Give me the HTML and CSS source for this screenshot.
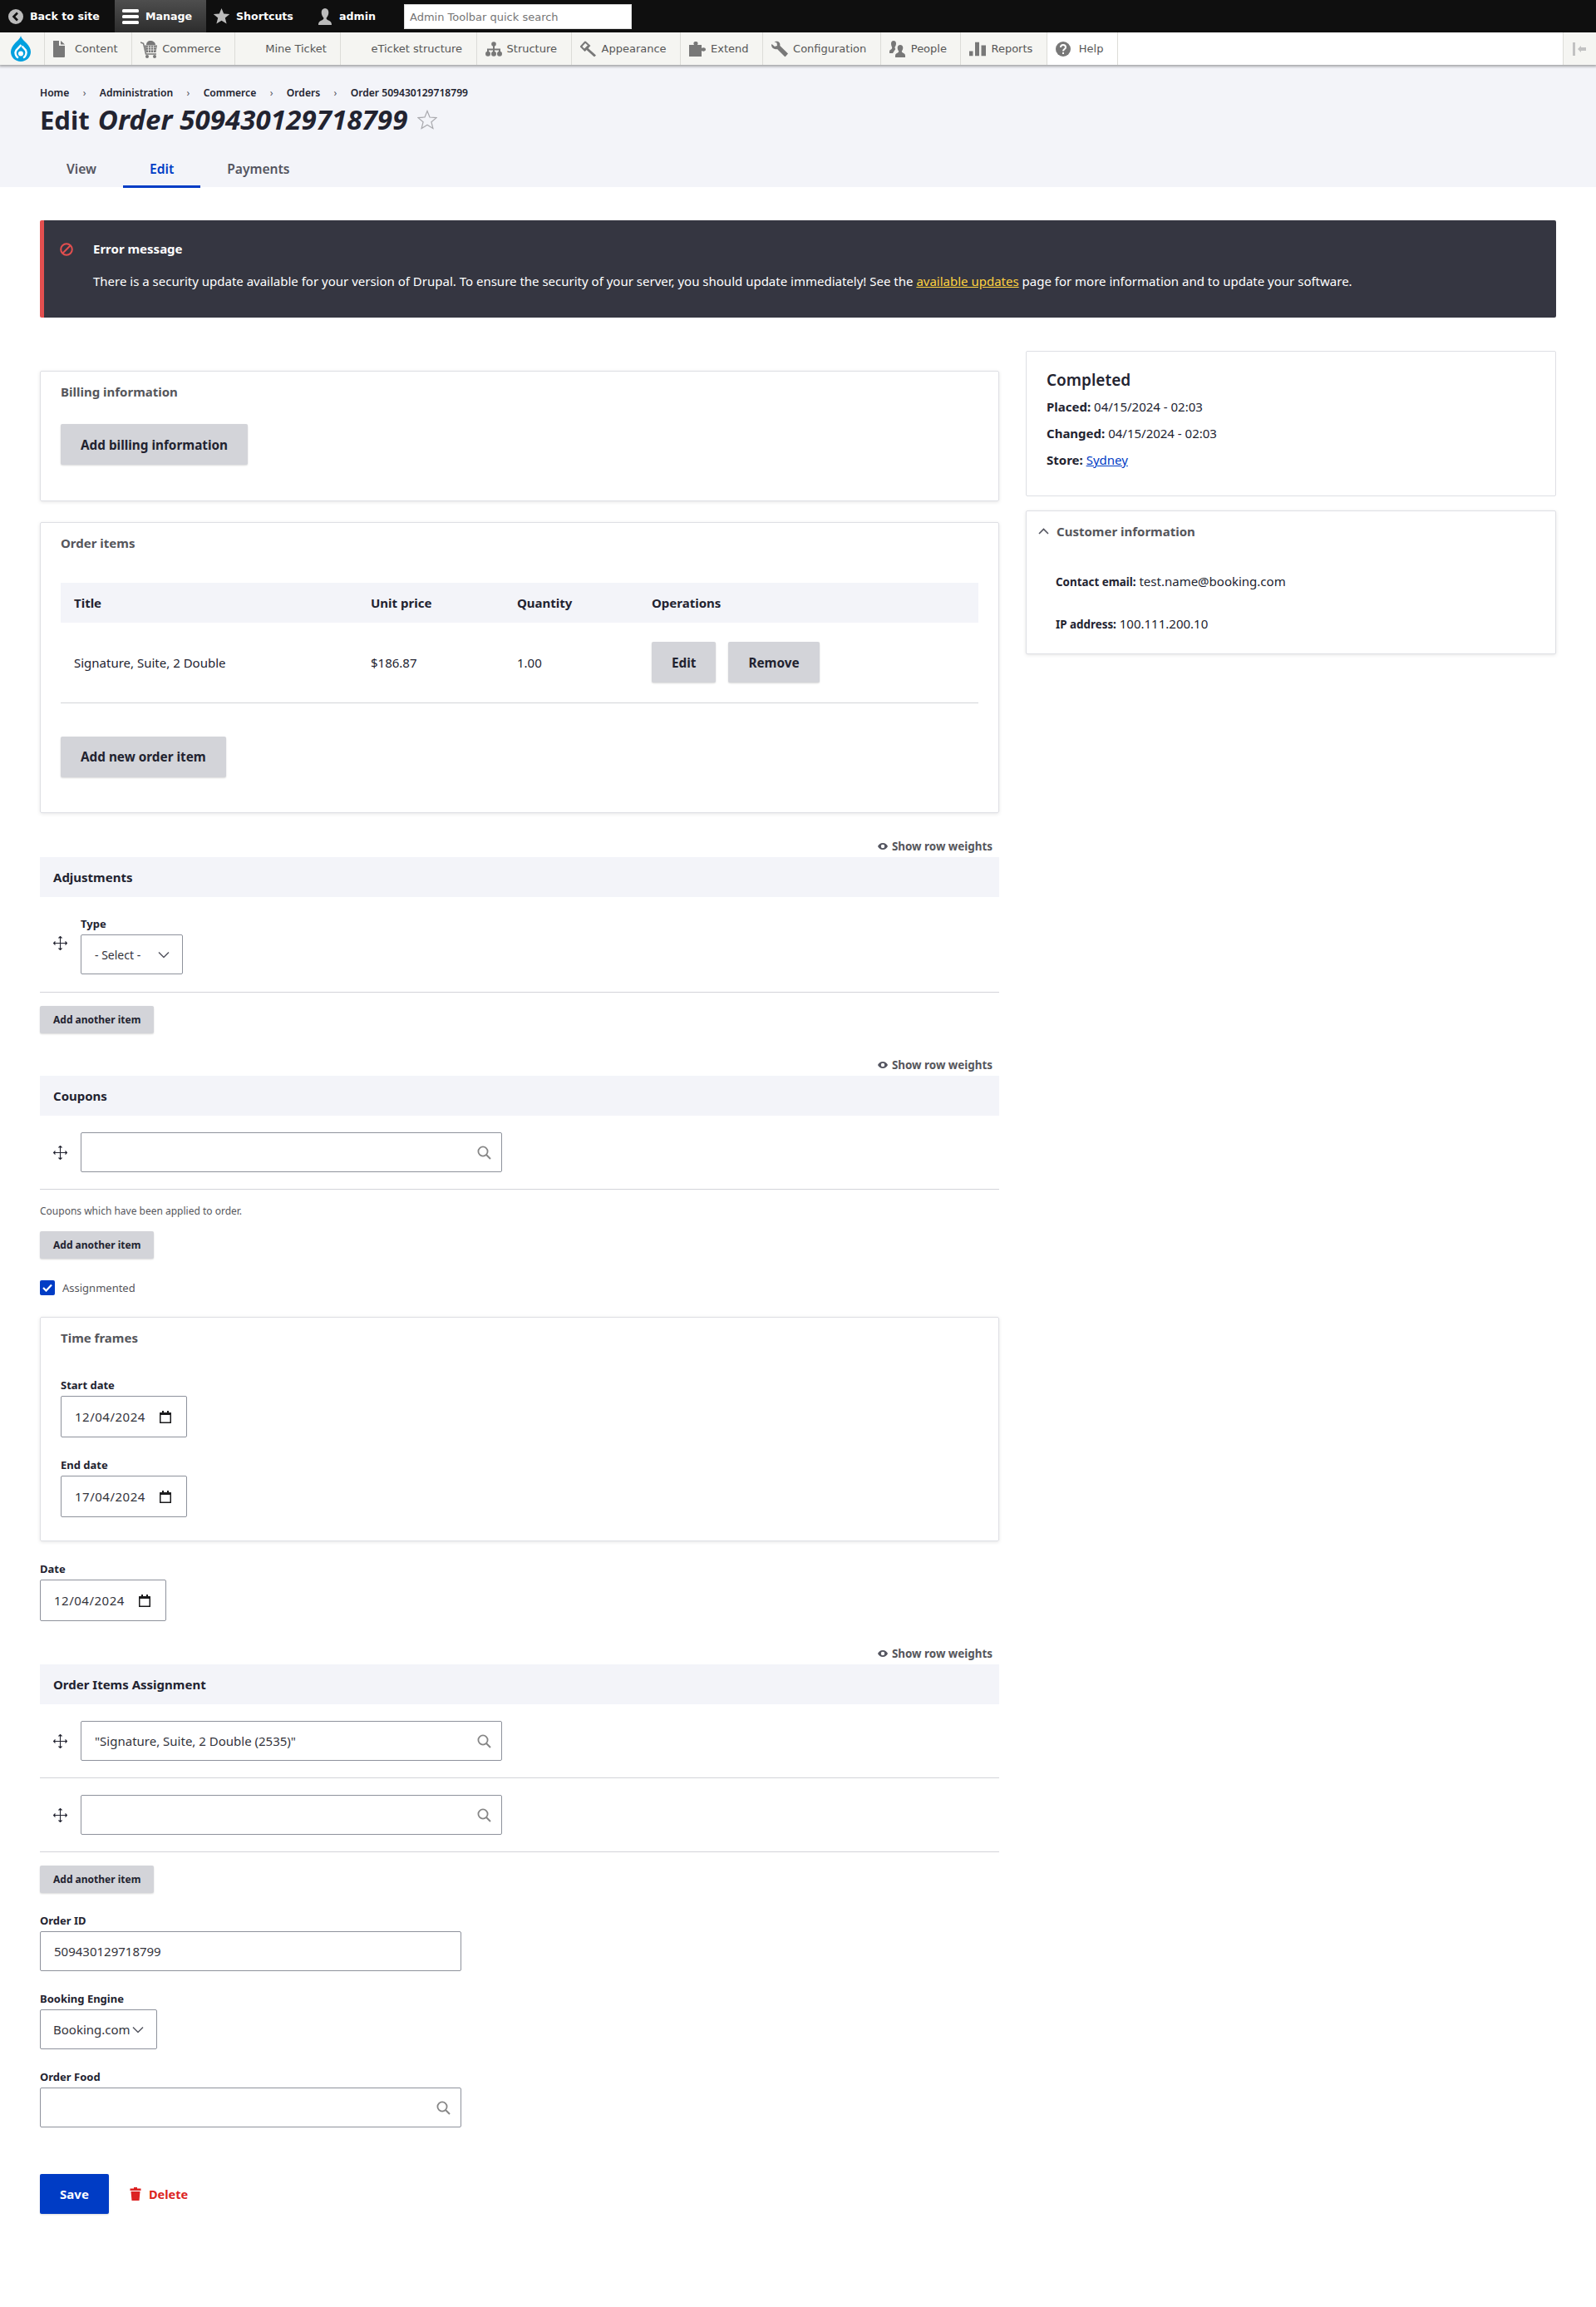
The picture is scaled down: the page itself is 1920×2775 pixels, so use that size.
FILE: index.html
```html
<!DOCTYPE html>
<html lang="en">
<head>
<meta charset="utf-8">
<title>Edit Order 509430129718799</title>
<link rel="stylesheet" href="styles.css">
</head>
<body>
<svg class="defs" width="0" height="0" aria-hidden="true">
  <symbol id="handle" viewBox="0 0 17 17"><path d="M8.5 0.5v16M0.5 8.5h16M6.5 2.5l2-2 2 2M6.5 14.5l2 2 2-2M2.5 6.5l-2 2 2 2M14.5 6.5l2 2-2 2" fill="none" stroke="#222330" stroke-width="1.1"/></symbol>
  <symbol id="search" viewBox="0 0 17 17"><circle cx="7" cy="7" r="5.6" fill="none" stroke="#868686" stroke-width="1.8"/><path d="M11 11l5 5" stroke="#868686" stroke-width="2"/></symbol>
  <symbol id="chev" viewBox="0 0 14 9"><path d="M1 1.5l6 6 6-6" fill="none" stroke="#545560" stroke-width="1.5"/></symbol>
  <symbol id="cal" viewBox="0 0 14 15"><path d="M3 0h2v2h4V0h2v2h2.5a.5.5 0 0 1 .5.5v12a.5.5 0 0 1-.5.5H.5a.5.5 0 0 1-.5-.5v-12A.5.5 0 0 1 .5 2H3zM1.5 5v8.500h11V5z" fill="#1b1b1d"/></symbol>
  <symbol id="eye" viewBox="0 0 12 8"><path d="M6 0C3 0 1 2 0 4c1 2 3 4 6 4s5-2 6-4c-1-2-3-4-6-4zm0 6.200A2.200 2.200 0 1 1 6 1.800a2.200 2.200 0 0 1 0 4.400z" fill="#545560"/></symbol>
</svg>

<header class="toolbar">
  <nav class="bar">
    <a class="bar-tab tab-back"><svg width="18" height="18" viewBox="0 0 18 18"><circle cx="9" cy="9" r="9" fill="#bbb"/><path d="M11 4.500L6.500 9l4.500 4.500" fill="none" stroke="#0f0f0f" stroke-width="2.600"/></svg>Back to site</a>
    <a class="bar-tab tab-manage"><svg width="20" height="18" viewBox="0 0 20 18"><rect y="0" width="20" height="4" rx="1.500" fill="#fff"/><rect y="7" width="20" height="4" rx="1.500" fill="#fff"/><rect y="14" width="20" height="4" rx="1.500" fill="#fff"/></svg>Manage</a>
    <a class="bar-tab tab-short"><svg width="19" height="19" viewBox="0 0 19 19"><path d="M9.500 0l2.700 6.600 7 .5-5.400 4.500 1.800 7-6.100-3.800-6.100 3.800 1.800-7L-.2 7.100l7-.5z" fill="#bbb"/></svg>Shortcuts</a>
    <a class="bar-tab tab-user"><svg width="20" height="20" viewBox="0 0 20 20"><path d="M10 0c2.800 0 4.300 2.200 4.300 5 0 2.700-1.300 5.300-2.600 6.500-.3 1.300.3 2 2.300 3 2.300 1 4 1.800 4 5.500H2c0-3.700 1.700-4.500 4-5.500 2-1 2.600-1.700 2.300-3C7 10.300 5.700 7.700 5.700 5 5.700 2.200 7.200 0 10 0z" fill="#bbb"/></svg>admin</a>
    <div class="bar-search">Admin Toolbar quick search</div>
  </nav>
  <nav class="tray">
    <a class="tray-logo"><svg width="24" height="31" viewBox="0 0 24 31"><path d="M12 0c1 4 4.500 6 7 9 3 3.300 5 6.500 5 10.500C24 26 18.500 31 12 31S0 26 0 19.500C0 15.500 2 12.300 5 9c2.500-3 6-5 7-9z" fill="#00a0df"/><path d="M12.500 11L6.500 17.500C4.500 20.500 6 25 9 26.500M13.500 12.500L18 17.500C19.500 20.500 18 25 15 26.500" fill="none" stroke="#fff" stroke-width="2.400"/><circle cx="12" cy="21.500" r="3" fill="#fff"/></svg></a>
    <a class="tray-item"><svg class="ti" width="14" height="20" viewBox="0 0 14 20"><path d="M0 0h7v6h7v13a1 1 0 0 1-1 1H1a1 1 0 0 1-1-1zM9 0l5 4.500H9z" fill="#787878"/></svg>Content</a>
    <a class="tray-item"><svg class="ti ti-cart" width="20" height="22" viewBox="0 0 20 22"><path d="M0 3l3.500 1.200L6.500 17H19" fill="none" stroke="#787878" stroke-width="1.500"/><path d="M7 6c0-3 2-5 5-5 3 0 6 2 6 5z" fill="#787878"/><path d="M5 6.500h15l-1.500 8.500H7z" fill="#787878"/><path d="M7 9h12M7.500 12h11M9.500 7v8M12.500 7v8M15.500 7v8" stroke="#f5f5f2" stroke-width=".7"/><circle cx="8" cy="20" r="2" fill="#787878"/><circle cx="17" cy="20" r="2" fill="#787878"/></svg>Commerce</a>
    <a class="tray-item">Mine Ticket</a>
    <a class="tray-item">eTicket structure</a>
    <a class="tray-item"><svg class="ti" width="20" height="18" viewBox="0 0 20 18"><circle cx="10" cy="3" r="2.800" fill="#787878"/><circle cx="3" cy="14.800" r="3" fill="#787878"/><circle cx="10" cy="14.800" r="3" fill="#787878"/><circle cx="17" cy="14.800" r="3" fill="#787878"/><path d="M10 5v8M3 13v-3.500h14V13" fill="none" stroke="#787878" stroke-width="2"/></svg>Structure</a>
    <a class="tray-item"><svg class="ti" width="20" height="19" viewBox="0 0 20 19"><path d="M6 1L1 6.500 5.500 11 11 5.500z" fill="none" stroke="#787878" stroke-width="2"/><path d="M8 9l10 9" stroke="#787878" stroke-width="3"/><path d="M4 10l5-5 2 2-5 5z" fill="#787878"/></svg>Appearance</a>
    <a class="tray-item"><svg class="ti" width="20" height="18" viewBox="0 0 20 18"><path d="M0 4h6C4.500 1.500 6 0 8 0s3.500 1.500 2 4h5v4c2-1.500 5-.5 5 1.500S17 12.500 15 11v7H0z" fill="#787878"/></svg>Extend</a>
    <a class="tray-item"><svg class="ti" width="20" height="19" viewBox="0 0 20 19"><path d="M6 0c3 0 5 2.500 4.300 5.500L20 15l-3.500 4-9.500-9.500C3.500 10.500 0 8 0 4.500L.5 3.500 4 6.500l3-1-.5-3.500L3.500.8z" fill="#787878"/></svg>Configuration</a>
    <a class="tray-item"><svg class="ti" width="20" height="20" viewBox="0 0 20 20"><path d="M5 0c2 0 3 1.500 3 3.500 0 1.500-.6 3-1.500 4 0 1 .3 2 .8 2.500L4 15H0v-2c0-1.500 1-2 2.500-3 .6-.5.8-1.500.5-2.500C2.500 6.500 2 5 2 3.500 2 1.500 3 0 5 0z" fill="#787878"/><path d="M13 5c2 0 3.300 1.500 3.300 3.500 0 1.500-.7 3-1.500 4 0 1 .5 1.500 1.700 2.200 1.500.8 2.500 1.300 2.500 3.300v2H7v-2c0-2 1-2.500 2.500-3.300 1.200-.7 1.700-1.200 1.700-2.200-.8-1-1.500-2.500-1.500-4C9.700 6.500 11 5 13 5z" fill="#787878"/></svg>People</a>
    <a class="tray-item"><svg class="ti" width="20" height="17" viewBox="0 0 20 17"><path d="M0 11h4.500v6H0zM7 0h5v17H7zM14.500 4H20v13h-5.500z" fill="#787878"/></svg>Reports</a>
    <a class="tray-item tray-help"><svg class="ti" width="18" height="18" viewBox="0 0 18 18"><circle cx="9" cy="9" r="9" fill="#787878"/><path d="M6 7c0-4 6-4 6 0 0 2-3 2-3 4.500" fill="none" stroke="#fff" stroke-width="2"/><rect x="8" y="13" width="2" height="2" fill="#fff"/></svg>Help</a>
    <div class="tray-fill"></div>
    <a class="tray-toggle" aria-label="Toggle orientation"><svg width="16" height="16" viewBox="0 0 16 16"><rect x="0" y="0" width="3" height="16" fill="#c2c2c2"/><path d="M6 8l4-4v2h6v4h-6v2z" fill="#c2c2c2"/></svg></a>
  </nav>
</header>

<section class="page-head">
  <ol class="crumbs">
    <li>Home</li><li class="sep">›</li><li>Administration</li><li class="sep">›</li><li>Commerce</li><li class="sep">›</li><li>Orders</li><li class="sep">›</li><li>Order 509430129718799</li>
  </ol>
  <h1 class="page-title"><span class="title-edit">Edit</span><em>Order 509430129718799</em><svg class="fav" width="24" height="24" viewBox="0 0 24 24"><path d="M12 1.500l3 7.500 8 .6-6.100 5.100 2 7.800L12 18.300 5.100 22.500l2-7.800L1 9.600l8-.6z" fill="none" stroke="#a9a9ae" stroke-width="1.200"/></svg></h1>
  <ul class="tabs">
    <li class="tab">View</li>
    <li class="tab tab-active">Edit</li>
    <li class="tab">Payments</li>
  </ul>
</section>

<main class="content">
  <div class="msg-error">
    <svg class="msg-icon" width="16" height="16" viewBox="0 0 16 16"><circle cx="8" cy="8" r="6.800" fill="none" stroke="#e34f4f" stroke-width="2"/><path d="M3.500 12.500l9-9" stroke="#e34f4f" stroke-width="2"/></svg>
    <div class="msg-body">
      <h2 class="msg-title">Error message</h2>
      <p class="msg-text">There is a security update available for your version of Drupal. To ensure the security of your server, you should update immediately! See the <a class="msg-link">available updates</a> page for more information and to update your software.</p>
    </div>
  </div>

  <div class="layout">
    <form class="col-main">
      <fieldset class="card card-billing">
        <h3 class="card-title">Billing information</h3>
        <button type="button" class="btn">Add billing information</button>
      </fieldset>

      <fieldset class="card card-items">
        <h3 class="card-title">Order items</h3>
        <table class="items">
          <thead><tr><th class="c-title">Title</th><th class="c-price">Unit price</th><th class="c-qty">Quantity</th><th>Operations</th></tr></thead>
          <tbody><tr>
            <td>Signature, Suite, 2 Double</td><td>$186.87</td><td>1.00</td>
            <td class="ops-cell"><div class="ops"><button type="button" class="btn">Edit</button><button type="button" class="btn">Remove</button></div></td>
          </tr></tbody>
        </table>
        <button type="button" class="btn">Add new order item</button>
      </fieldset>

      <div class="weights weights-a"><svg width="12" height="8"><use href="#eye"/></svg>Show row weights</div>
      <div class="multi-head">Adjustments</div>
      <div class="row row-adj">
        <svg class="handle" width="17" height="17"><use href="#handle"/></svg>
        <div class="type-field">
          <label class="label">Type</label>
          <div class="field select select-type"><span>- Select -</span><svg width="14" height="9"><use href="#chev"/></svg></div>
        </div>
      </div>
      <button type="button" class="btn btn-small">Add another item</button>

      <div class="weights weights-b"><svg width="12" height="8"><use href="#eye"/></svg>Show row weights</div>
      <div class="multi-head">Coupons</div>
      <div class="row row-coupon">
        <svg class="handle" width="17" height="17"><use href="#handle"/></svg>
        <div class="field auto"><svg width="17" height="17"><use href="#search"/></svg></div>
      </div>
      <p class="help">Coupons which have been applied to order.</p>
      <button type="button" class="btn btn-small">Add another item</button>
      <label class="check"><span class="box"><svg width="12" height="10" viewBox="0 0 12 10"><path d="M1 5l3.500 3.500L11 1.500" fill="none" stroke="#fff" stroke-width="2.200"/></svg></span>Assignmented</label>

      <fieldset class="card card-time">
        <h3 class="card-title">Time frames</h3>
        <label class="label label-start">Start date</label>
        <div class="field date"><span>12/04/2024</span><svg width="14" height="15"><use href="#cal"/></svg></div>
        <label class="label label-end">End date</label>
        <div class="field date"><span>17/04/2024</span><svg width="14" height="15"><use href="#cal"/></svg></div>
      </fieldset>

      <label class="label label-date">Date</label>
      <div class="field date"><span>12/04/2024</span><svg width="14" height="15"><use href="#cal"/></svg></div>

      <div class="weights weights-c"><svg width="12" height="8"><use href="#eye"/></svg>Show row weights</div>
      <div class="multi-head">Order Items Assignment</div>
      <div class="row row-assign">
        <svg class="handle" width="17" height="17"><use href="#handle"/></svg>
        <div class="field auto"><span>"Signature, Suite, 2 Double (2535)"</span><svg width="17" height="17"><use href="#search"/></svg></div>
      </div>
      <div class="row row-assign">
        <svg class="handle" width="17" height="17"><use href="#handle"/></svg>
        <div class="field auto"><svg width="17" height="17"><use href="#search"/></svg></div>
      </div>
      <button type="button" class="btn btn-small btn-assign">Add another item</button>

      <label class="label label-block">Order ID</label>
      <div class="field wide"><span>509430129718799</span></div>
      <label class="label label-block">Booking Engine</label>
      <div class="field select select-engine"><span>Booking.com</span><svg width="14" height="9"><use href="#chev"/></svg></div>
      <label class="label label-block">Order Food</label>
      <div class="field wide auto-wide"><svg width="17" height="17"><use href="#search"/></svg></div>

      <div class="actions">
        <button type="button" class="btn btn-save">Save</button>
        <a class="del"><svg width="14" height="16" viewBox="0 0 14 16"><path d="M5 0h4v1.500h4.500V4H.5V1.500H5zM1.500 5h11l-1 11h-9z" fill="#dc2323"/></svg>Delete</a>
      </div>
    </form>

    <aside class="col-side">
      <div class="side-card side-status">
        <h2 class="status">Completed</h2>
        <p class="meta"><b>Placed:</b> 04/15/2024 - 02:03</p>
        <p class="meta"><b>Changed:</b> 04/15/2024 - 02:03</p>
        <p class="meta"><b>Store:</b> <a class="link">Sydney</a></p>
      </div>
      <div class="side-card side-cust">
        <h3 class="cust-title"><svg width="13" height="8" viewBox="0 0 13 8"><path d="M1 7l5.500-5.500L12 7" fill="none" stroke="#545560" stroke-width="1.600"/></svg>Customer information</h3>
        <p class="cust-row"><b>Contact email:</b> test.name@booking.com</p>
        <p class="cust-row"><b>IP address:</b> 100.111.200.10</p>
      </div>
    </aside>
  </div>
</main>
</body>
</html>
```
FILE: styles.css
```css
* { box-sizing: border-box; }
html, body { margin: 0; padding: 0; }
body { background: #fff; color: #222330; font-family: "Noto Sans", "Open Sans", sans-serif; font-size: 15px; min-height: 2775px; }
h1, h2, h3, p, ul, ol, fieldset { margin: 0; padding: 0; }
fieldset { border: 0; min-width: 0; }
ul, ol { list-style: none; }
button { font-family: inherit; cursor: pointer; }
.defs { position: absolute; }

/* Toolbar */
.toolbar { font-family: "DejaVu Sans", Verdana, sans-serif; font-size: 13px; position: relative; z-index: 2; }
.bar { height: 39px; background: #0f0f0f; display: flex; align-items: center; }
.bar-tab { height: 39px; display: flex; align-items: center; color: #fff; font-weight: 700; font-size: 12.6px; }
.tab-back { width: 138px; padding-left: 10px; gap: 8px; }
.tab-manage { width: 110px; padding-left: 9px; gap: 8px; background: linear-gradient(#4e4e4e, #2d2d2d); }
.tab-short { width: 122px; padding-left: 9px; gap: 8px; }
.tab-user { width: 116px; padding-left: 11px; gap: 7px; }
.bar-search { width: 274px; height: 30px; background: #fff; border: 1px solid #ddd; color: #757575; font-size: 13px; line-height: 30px; padding-left: 6px; }
.tray { height: 39px; background: #fff; display: flex; box-shadow: 0 1px 3px 1px rgba(0,0,0,.3333); }
.tray-logo { width: 54px; background: #f5f5f2; border-right: 1px solid #dcdcd8; display: flex; align-items: center; justify-content: center; padding-right: 4px; }
.tray-item { height: 39px; background: #f5f5f2; border-right: 1px solid #dcdcd8; color: #565656; display: flex; align-items: center; position: relative; padding: 0 16.5px 0 36px; font-size: 13px; white-space: nowrap; }
.tray-item .ti { position: absolute; left: 10px; top: 50%; transform: translateY(-50%); }
.tray-help { background: #fff; padding-left: 38px; }
.tray-fill { flex: 1; }
.tray-toggle { width: 40px; background: #f5f5f2; border-left: 1px solid #dcdcd8; display: flex; align-items: center; padding-left: 11px; }

/* Page head */
.page-head { background: #f3f4f9; height: 147px; padding: 24px 48px 0; }
.crumbs { display: flex; align-items: center; font-size: 12.1px; font-weight: 600; color: #222330; height: 18px; }
.crumbs .sep { width: 36.5px; text-align: center; font-weight: 400; color: #545560; }
.page-title { font-size: 32px; line-height: 40px; font-weight: 700; color: #222330; margin-top: 4px; display: flex; align-items: center; white-space: nowrap; }
.title-edit { font-size: 31px; }
.page-title em { margin-left: 10px; font-style: italic; font-size: 33px; letter-spacing: .1px; }
.fav { margin-left: 12px; }
.tabs { display: flex; margin-top: 16px; height: 48px; }
.tab { padding: 0 32px; height: 45px; line-height: 46px; font-weight: 600; font-size: 15.6px; color: #545560; }
.tab-active { color: #003cc5; border-bottom: 3px solid #003cc5; height: 46px; }

/* Messages */
.content { padding: 40px 48px 0; }
.msg-error { background: #353641; border-left: 5px solid #e34f4f; border-radius: 2px; height: 117px; display: flex; color: #fff; padding: 27px 0 0 19px; }
.msg-icon { flex: none; }
.msg-body { margin-left: 24px; }
.msg-title { font-size: 15px; line-height: 15px; font-weight: 700; }
.msg-text { font-size: 15px; line-height: 21px; margin-top: 21px; white-space: nowrap; }
.msg-link { color: #ffd23f; text-decoration: underline; }

/* Layout */
.layout { display: grid; grid-template-columns: 1154px 638px; gap: 32px; margin-top: 40px; }
.col-main { display: flex; flex-direction: column; align-items: flex-start; padding-top: 24px; }
.col-main > .card, .col-main > .multi-head, .col-main > .row, .col-main > .weights { width: 100%; }

.card { border: 1px solid #dedfe4; border-radius: 2px; box-shadow: 0 1px 4px rgba(0,0,0,.1); padding: 0 24px; background: #fff; }
.card-title { font-size: 15px; font-weight: 700; color: #55565b; line-height: 20px; }
.card-billing { height: 157px; padding-top: 14px; }
.card-billing .btn { margin-top: 29px; }
.card-items { height: 350px; margin-top: 25px; padding-top: 14px; }
.items { width: 100%; border-collapse: collapse; font-size: 15px; margin-top: 38px; }
.items th { background: #f3f4f9; height: 48px; padding: 0 16px; text-align: left; font-weight: 700; color: #222330; }
.items td { height: 96px; padding: 0 16px; border-bottom: 1px solid #d3d4d9; }
.c-title { width: 357px; }
.c-price { width: 176px; }
.c-qty { width: 162px; }
.ops { display: flex; align-items: center; gap: 15px; }
.card-items > .btn { margin-top: 40px; }

.btn { border: 0; border-radius: 2px; background: #d3d4d9; color: #222330; font-size: 15.3px; font-weight: 700; height: 49px; padding: 0 24px; box-shadow: 0 1px 2px rgba(0,0,0,.15); white-space: nowrap; }
.btn-small { height: 33px; padding: 0 16px; font-size: 12px; }
.btn-save { background: #003cc5; color: #fff; width: 83px; height: 48px; padding: 0; font-size: 15px; }

.weights { display: flex; justify-content: flex-end; align-items: center; gap: 5px; padding-right: 8px; font-size: 13.4px; font-weight: 700; color: #55565b; height: 20px; }
.weights-a { margin-top: 30px; }
.weights-b { margin-top: 28px; }
.weights-c { margin-top: 29px; }
.multi-head { background: #f3f4f9; height: 48px; line-height: 49px; padding-left: 16px; font-size: 15px; font-weight: 700; margin-top: 3px; }

.row { display: flex; align-items: center; border-bottom: 1px solid #d3d4d9; padding-left: 16px; }
.handle { flex: none; }
.row .handle { margin-right: 16px; }
.row-adj { height: 115px; align-items: flex-start; padding-top: 23px; }
.row-adj .handle { margin-top: 24px; }
.row-adj + .btn { margin-top: 16px; }
.row-coupon { height: 89px; }
.row-assign { height: 89px; }
.help { font-size: 12px; color: #55565b; line-height: 16px; margin-top: 18px; }
.help + .btn { margin-top: 16px; }
.check { display: flex; align-items: center; font-size: 13px; color: #55565b; margin-top: 26px; height: 18px; gap: 9px; }
.box { width: 18px; height: 18px; background: #003cc5; border-radius: 2px; display: flex; align-items: center; justify-content: center; }
.label { display: block; font-size: 13px; font-weight: 700; line-height: 18px; color: #222330; }
.field { display: flex; align-items: center; justify-content: space-between; height: 48px; border: 1px solid #8e929c; border-radius: 2px; background: #fff; font-size: 15px; color: #33343c; padding: 0 16px; }
.type-field .label { margin-bottom: 4px; }
.select-type { width: 123px; font-size: 14px; padding-right: 15px; }
.auto { width: 507px; justify-content: flex-end; padding-right: 12px; }
.auto span { margin-right: auto; }
.card-time { height: 270px; margin-top: 26px; padding-top: 14px; }
.label-start { margin-top: 38px; margin-bottom: 4px; }
.label-end { margin-top: 24px; margin-bottom: 4px; }
.date { width: 152px; height: 50px; padding-right: 18px; letter-spacing: .5px; }
.label-date { margin-top: 24px; margin-bottom: 4px; }
.btn-assign { margin-top: 16px; }
.label-block { margin-top: 24px; margin-bottom: 4px; }
.wide { width: 507px; }
.auto-wide { justify-content: flex-end; padding-right: 12px; }
.select-engine { width: 141px; padding: 0 15px; }
.actions { display: flex; align-items: center; margin-top: 56px; }
.del { display: flex; align-items: center; gap: 9px; margin-left: 25px; color: #dc2323; font-weight: 700; font-size: 14.5px; }

/* Sidebar */
.col-side { display: flex; flex-direction: column; gap: 17px; }
.side-card { border: 1px solid #dedfe4; border-radius: 2px; background: #fff; }
.side-status { height: 175px; padding: 20px 24px 0; }
.status { font-size: 19px; line-height: 28px; font-weight: 600; color: #222330; margin-bottom: 2px; }
.meta { font-size: 15px; line-height: 32px; }
.link { color: #003cc5; text-decoration: underline; }
.side-cust { height: 173px; box-shadow: 0 1px 4px rgba(0,0,0,.1); padding-top: 14px; }
.cust-title { display: flex; align-items: center; font-size: 15px; line-height: 20px; font-weight: 700; color: #55565b; padding-left: 14px; gap: 9px; }
.cust-row { font-size: 15px; line-height: 20px; padding-left: 35px; margin-top: 30px; }
.cust-title + .cust-row { margin-top: 40px; }
.cust-row b { font-size: 13.4px; }
```
